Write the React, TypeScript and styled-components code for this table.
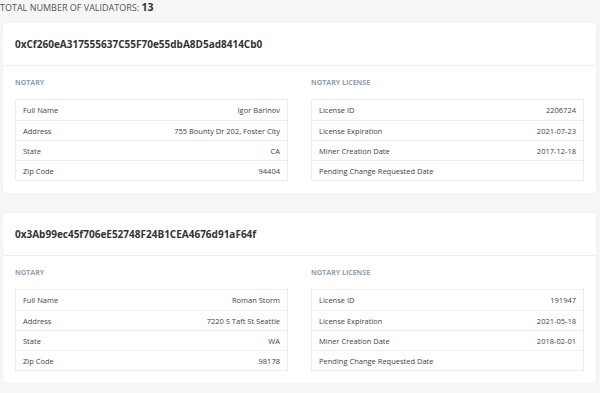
import styled, { createGlobalStyle } from 'styled-components';

const GlobalStyle = createGlobalStyle`
  html, body {
    margin: 0;
    padding: 0;
    background: #f6f6f7;
    font-family: 'Open Sans', 'Liberation Sans', sans-serif;
    color: #333;
  }
`;

interface Validator {
  address: string;
  notary: [string, string][];
  license: [string, string][];
}

const validators: Validator[] = [
  {
    address: '0xCf260eA317555637C55F70e55dbA8D5ad8414Cb0',
    notary: [
      ['Full Name', 'Igor Barinov'],
      ['Address', '755 Bounty Dr 202, Foster City'],
      ['State', 'CA'],
      ['Zip Code', '94404'],
    ],
    license: [
      ['License ID', '2206724'],
      ['License Expiration', '2021-07-23'],
      ['Miner Creation Date', '2017-12-18'],
      ['Pending Change Requested Date', ''],
    ],
  },
  {
    address: '0x3Ab99ec45f706eE52748F24B1CEA4676d91aF64f',
    notary: [
      ['Full Name', 'Roman Storm'],
      ['Address', '7220 S Taft St Seattle'],
      ['State', 'WA'],
      ['Zip Code', '98178'],
    ],
    license: [
      ['License ID', '191947'],
      ['License Expiration', '2021-05-18'],
      ['Miner Creation Date', '2018-02-01'],
      ['Pending Change Requested Date', ''],
    ],
  },
];

const Section = ({ title, rows }: { title: string; rows: [string, string][] }) => (
  <Column>
    <SectionTitle>{title}</SectionTitle>
    <Table>
      {rows.map(([label, value]) => (
        <Row key={label}>
          <span>{label}</span>
          <span>{value}</span>
        </Row>
      ))}
    </Table>
  </Column>
);

const App = () => {
  return (
    <>
      <GlobalStyle />
      <Page>
        <Total>
          TOTAL NUMBER OF VALIDATORS: <strong>13</strong>
        </Total>
        {validators.map((v) => (
          <Card key={v.address}>
            <CardHeader>{v.address}</CardHeader>
            <CardBody>
              <Section title="NOTARY" rows={v.notary} />
              <Section title="NOTARY LICENSE" rows={v.license} />
            </CardBody>
          </Card>
        ))}
      </Page>
    </>
  );
};

const Page = styled.div`
  padding: 0 4px 0 3px;
  display: flex;
  flex-direction: column;
`;

const Total = styled.div`
  height: 23px;
  margin-left: -3px;
  font-size: 9px;
  line-height: 14px;
  color: #555;

  strong {
    font-size: 10.5px;
    font-weight: 700;
    color: #333;
  }
`;

const Card = styled.div`
  background: #fff;
  border-radius: 3px;
  box-shadow: 0 0 2px rgba(0, 0, 0, 0.06);

  & + & {
    margin-top: 20px;
  }
`;

const CardHeader = styled.div`
  box-sizing: border-box;
  height: 43px;
  display: flex;
  align-items: center;
  padding: 0 12px;
  font-size: 10px;
  font-weight: 700;
  color: #333;
  border-bottom: 1px solid #efefef;
`;

const CardBody = styled.div`
  display: grid;
  grid-template-columns: 1fr 1fr;
  column-gap: 23px;
  padding: 11px 12px 12px;
`;

const Column = styled.div`
  display: flex;
  flex-direction: column;
`;

const SectionTitle = styled.div`
  font-size: 7px;
  font-weight: 700;
  color: #8fa1b3;
  height: 22px;
  line-height: 12px;
`;

const Table = styled.div`
  border: 1px solid #ededed;
`;

const Row = styled.div`
  box-sizing: border-box;
  display: flex;
  justify-content: space-between;
  align-items: center;
  height: 20px;
  padding: 0 7px;
  font-size: 7.5px;
  color: #444;

  & + & {
    border-top: 1px solid #ededed;
  }
`;

export default App;
